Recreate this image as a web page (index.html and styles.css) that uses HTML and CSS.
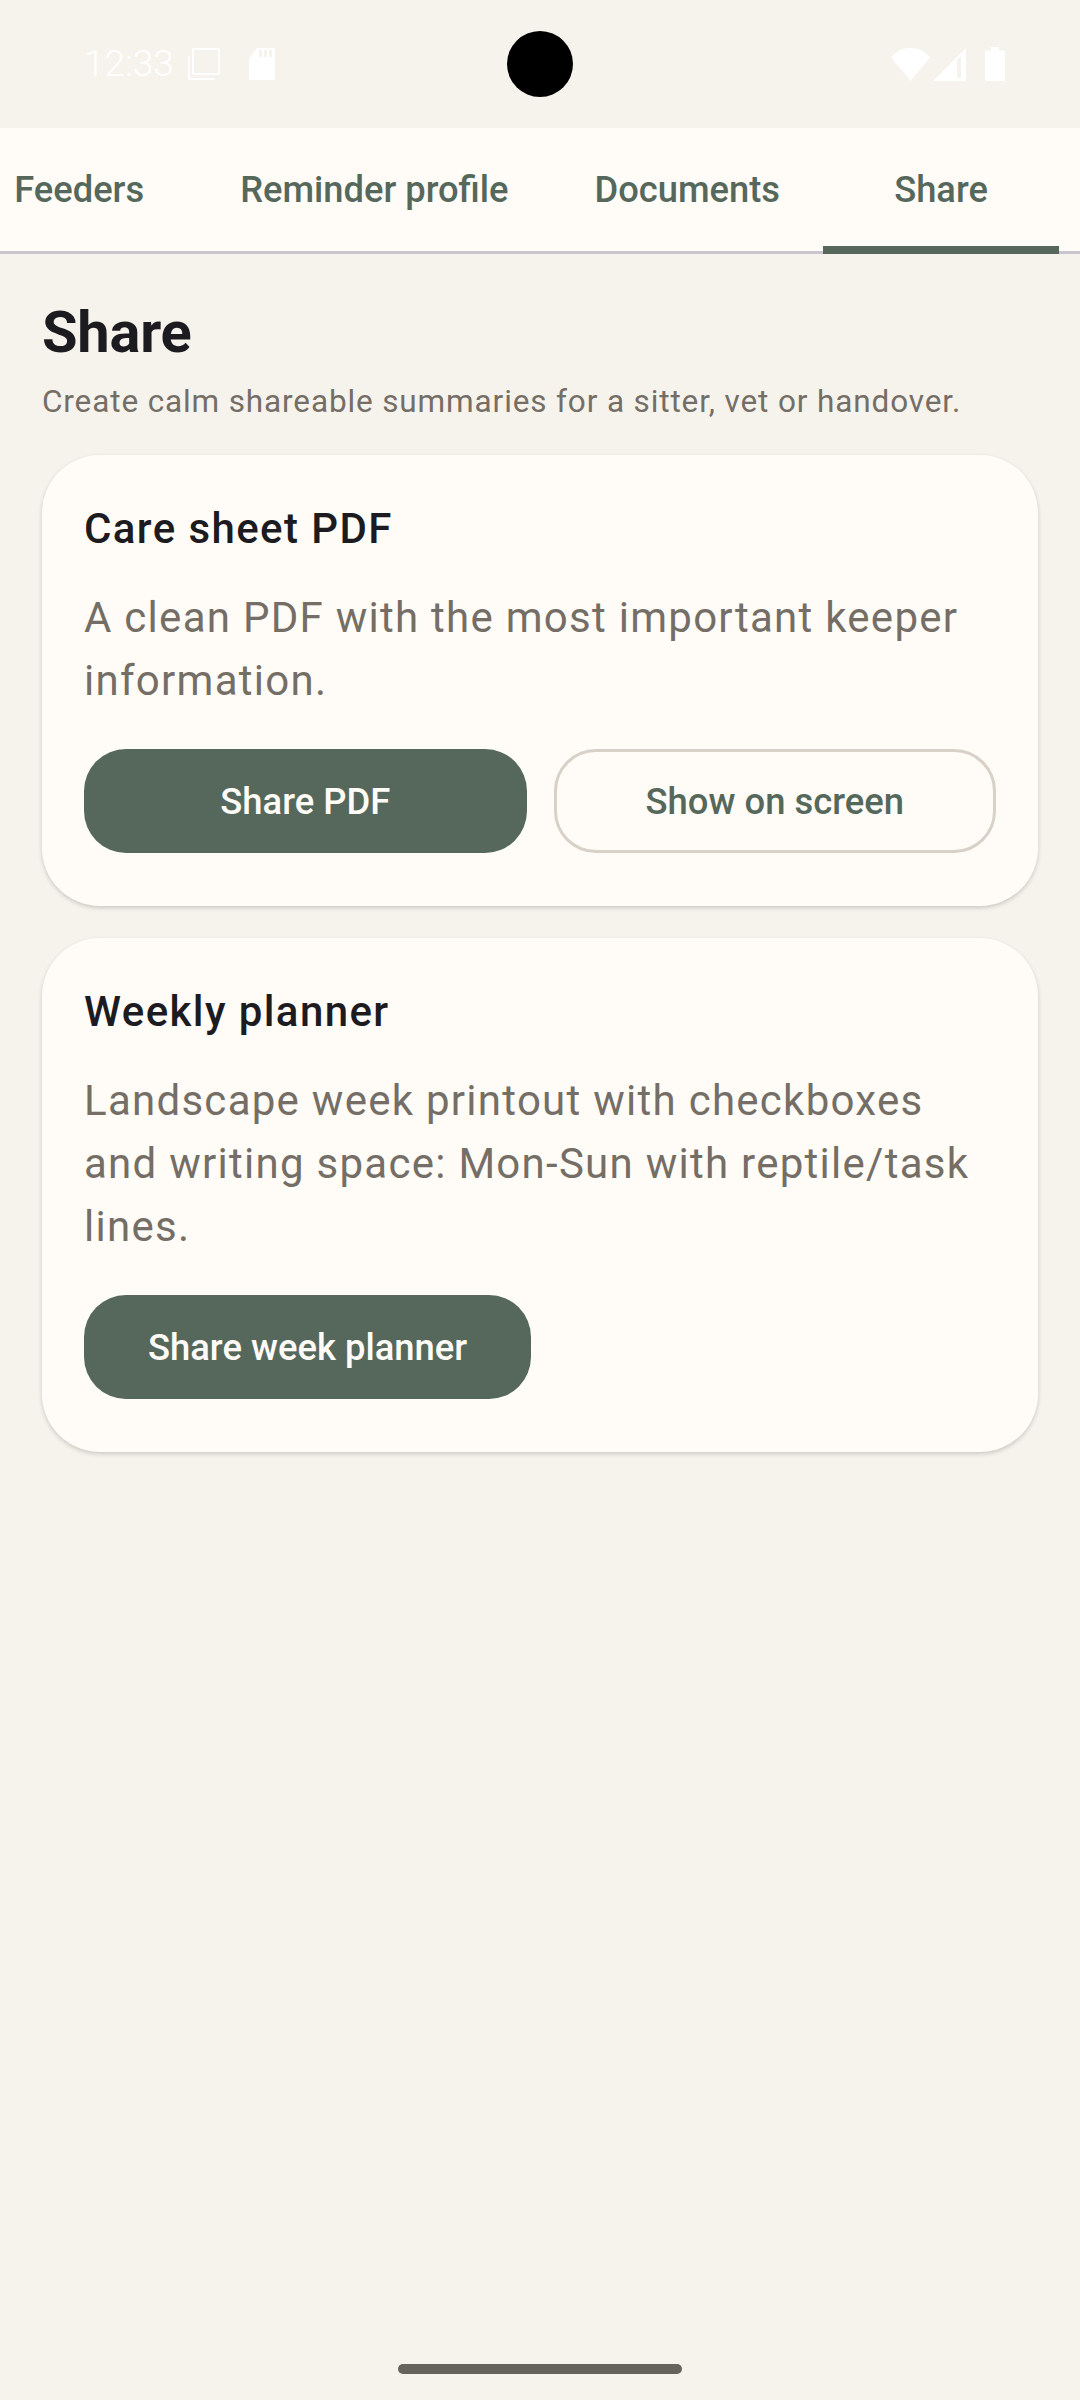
FILE: index.html
```html
<!DOCTYPE html>
<html lang="en">
<head>
<meta charset="utf-8">
<title>Share</title>
<link rel="stylesheet" href="styles.css">
</head>
<body>
<div class="screen">
  <header class="status">
    <div class="status-left">
      <span class="clock">12:33</span>
      <svg class="ic-copy" viewBox="0 0 32 32" width="32" height="32"><rect x="5" y="1" width="26" height="25" rx="1" fill="none" stroke="#fff" stroke-width="2"/><path d="M1 8V30A1 1 0 0 0 2 31H27" fill="none" stroke="#fff" stroke-width="2"/></svg>
      <svg class="ic-sd" viewBox="0 0 26 32" width="26" height="32"><path d="M8 0H24.500A1.500 1.500 0 0 1 26 1.500V30.500A1.500 1.500 0 0 1 24.500 32H1.500A1.500 1.500 0 0 1 0 30.500V11Z" fill="#fff"/><path d="M10 2h3v7h-3zM15 2h3v7h-3zM20 2h3v7h-3z" fill="#f6f3ed"/></svg>
    </div>
    <div class="camera"></div>
    <div class="status-right">
      <svg class="ic-wifi" viewBox="0 0 39 33" width="39" height="33"><path d="M0 9.500C5 3 12 0 19.500 0S34 3 39 9.500L19.500 33Z" fill="#fff"/></svg>
      <svg class="ic-signal" viewBox="0 0 33 33" width="33" height="33"><path d="M33 0V33H0Z" fill="#fff"/><path d="M24 11L28 9V30H24Z" fill="#f6f3ed"/></svg>
      <svg class="ic-batt" viewBox="0 0 20 34" width="20" height="34"><path d="M6 0H14V3.500H18.500A1.500 1.500 0 0 1 20 5V32.500A1.500 1.500 0 0 1 18.500 34H1.500A1.500 1.500 0 0 1 0 32.500V5A1.500 1.500 0 0 1 1.500 3.500H6Z" fill="#fff"/></svg>
    </div>
  </header>

  <nav class="tabs">
    <div class="tab">Feeders</div>
    <div class="tab">Reminder profile</div>
    <div class="tab">Documents</div>
    <div class="tab tab-active">Share</div>
  </nav>

  <main class="content">
    <h1 class="page-title">Share</h1>
    <p class="page-sub">Create calm shareable summaries for a sitter, vet or handover.</p>

    <section class="card">
      <h2 class="card-title">Care sheet PDF</h2>
      <p class="card-text">A clean PDF with the most important keeper information.</p>
      <div class="actions actions-split">
        <button class="btn btn-fill">Share PDF</button>
        <button class="btn btn-line">Show on screen</button>
      </div>
    </section>

    <section class="card">
      <h2 class="card-title">Weekly planner</h2>
      <p class="card-text">Landscape week printout with checkboxes and writing space: Mon-Sun with reptile/task lines.</p>
      <div class="actions">
        <button class="btn btn-fill btn-auto">Share week planner</button>
      </div>
    </section>
  </main>

  <div class="home-area"><div class="home-bar"></div></div>
</div>
</body>
</html>
```

FILE: styles.css
```css
* { box-sizing: border-box; }
html, body { margin: 0; padding: 0; }
body { background: #f6f3ed; font-family: Roboto, "Noto Sans", sans-serif; }
.screen { width: 1080px; height: 2400px; display: flex; flex-direction: column; overflow: hidden; position: relative; }

.status { height: 128px; flex: none; display: flex; align-items: center; justify-content: space-between; padding: 0 75px 0 84px; position: relative; }
.status-left { display: flex; align-items: center; height: 36px; }
.clock { color: #fff; font-size: 37px; font-weight: 300; line-height: 36px; width: 104px; }
.ic-sd { margin-left: 29px; }
.status-right { display: flex; align-items: center; gap: 3px; }
.ic-batt { margin-left: 16px; }
.camera { position: absolute; left: 507px; top: 31px; width: 66px; height: 66px; border-radius: 50%; background: #000; }

.tabs { height: 126px; flex: none; background: #fffcf7; display: flex; justify-content: flex-end; padding-right: 21px; border-bottom: 3px solid #cac4d0; }
.tab { min-width: 236px; flex: none; padding: 0 43px 3px; height: 126px; display: flex; align-items: center; justify-content: center; color: #56685c; font-size: 36.3px; font-weight: 500; white-space: nowrap; }
.tab-active { position: relative; }
.tab-active::after { content: ""; position: absolute; left: 0; right: 0; bottom: 0; height: 8px; background: #56685c; }

.content { flex: 1; padding: 0 42px; }
.page-title { margin: 36px 0 0; font-size: 57.75px; line-height: 84px; font-weight: 700; color: #1c1b1f; letter-spacing: -0.2px; }
.page-sub { margin: 7px 0 0; font-size: 31.5px; line-height: 42px; color: #746e66; letter-spacing: 0.87px; }

.card { margin-top: 32px; background: #fffcf7; border-radius: 58px; padding: 42px 42px 53px; box-shadow: 0 2px 4px rgba(60,50,40,0.22); }
.card + .card { margin-top: 32px; }
.card-title { margin: 0; font-size: 42px; line-height: 63px; font-weight: 500; color: #1c1b1f; letter-spacing: 1.4px; }
.card-text { margin: 26px 0 0; font-size: 42px; line-height: 63px; color: #746e66; letter-spacing: 1.27px; }
.actions { display: flex; margin-top: 37px; }
.actions-split { display: grid; grid-template-columns: 1fr 1fr; gap: 27px; }
.btn { height: 104px; border-radius: 42px; font-family: inherit; font-size: 36.4px; font-weight: 500; border: 0; padding: 0; }
.btn-auto { padding: 0 64px; }
.btn-fill { background: #56685c; color: #fffcf7; }
.btn-line { background: transparent; color: #56685c; border: 3px solid #d8d1c7; }

.home-area { position: absolute; left: 0; right: 0; bottom: 0; height: 44px; }
.home-bar { position: absolute; left: 398px; top: 8px; width: 284px; height: 10px; border-radius: 5px; background: #64635c; }
```
